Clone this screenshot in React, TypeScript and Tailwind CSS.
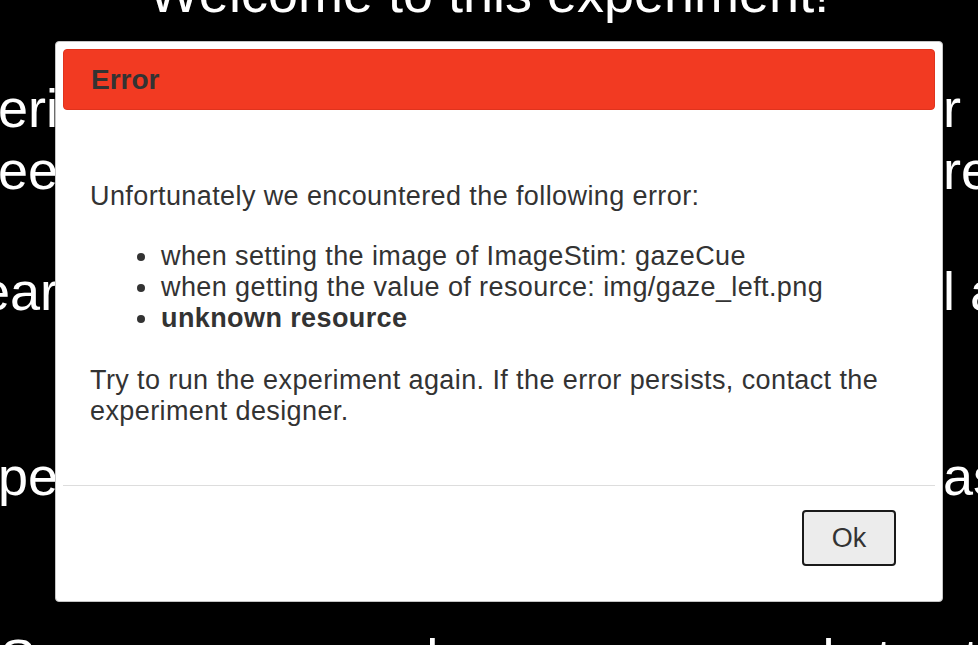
import React from "react";

function Row({
  left,
  mid,
  right,
  className,
}: {
  left: string;
  mid: string;
  right: string;
  className: string;
}) {
  return (
    <div className={"flex w-full whitespace-nowrap " + className}>
      <div className="w-[58px] shrink-0 overflow-hidden flex justify-end">
        <span className="shrink-0">{left}</span>
      </div>
      <div className="flex-1 min-w-0 overflow-hidden">
        <span>{mid}</span>
      </div>
      <div className="w-[35px] shrink-0 overflow-hidden">
        <span>{right}</span>
      </div>
    </div>
  );
}

export default function App() {
  return (
    <div className="relative w-full h-[645px] bg-black overflow-hidden font-['Liberation_Sans',Arial,sans-serif]">
      {/* experiment canvas text behind the dialog */}
      <div className="flex flex-col text-white text-[54px] leading-[62px]">
        <div className="mt-[-38px] text-center whitespace-nowrap">Welcome to this experiment!</div>
        <Row
          className="mt-[53px]"
          left="In this experi"
          mid="ment you will see a face in the center of the screen. Keep you"
          right="r"
        />
        <Row
          className="mt-0"
          left="eyes fixed on the scree"
          mid="n at all times. A target letter will then appear either to the left or to the right of the face, and you a"
          right="re asked"
        />
        <Row
          className="mt-[59px]"
          left="Targets may appear"
          mid=" on either side. Press the key that matches the side on which they wil"
          right="l appear"
        />
        <Row
          className="mt-[123px]"
          left="Respond with both spe"
          mid="ed and accuracy. The direction of the gaze does not predict the target, so respond"
          right="as fast"
        />
        <div className="mt-[120px] text-center whitespace-nowrap">
          So press space when you are ready to start the task and let's begin
        </div>
      </div>

      {/* error dialog */}
      <div className="absolute left-[55px] top-[41px] w-[888px] h-[561px] bg-white border border-[#c5c5c5] rounded-[4px] p-[7px] flex flex-col text-[#333]">
        <div className="h-[61px] shrink-0 bg-[#f23a22] border border-[#e0331d] rounded-[4px] flex items-center pl-[27px]">
          <span className="text-[28px] font-bold leading-none">Error</span>
        </div>
        <div className="flex-1 pl-[27px] pr-[27px] pt-[71px] text-[27px] leading-[31px] tracking-[0.4px]">
          <p>Unfortunately we encountered the following error:</p>
          <ul className="mt-[29px] pl-[47px]">
            <li className="flex items-center">
              <span className="w-[8px] h-[8px] rounded-full bg-[#333] mr-[16px] shrink-0" />
              <span>when setting the image of ImageStim: gazeCue</span>
            </li>
            <li className="flex items-center">
              <span className="w-[8px] h-[8px] rounded-full bg-[#333] mr-[16px] shrink-0" />
              <span>when getting the value of resource: img/gaze_left.png</span>
            </li>
            <li className="flex items-center">
              <span className="w-[8px] h-[8px] rounded-full bg-[#333] mr-[16px] shrink-0" />
              <span className="font-bold">unknown resource</span>
            </li>
          </ul>
          <p className="mt-[31px]">
            Try to run the experiment again. If the error persists, contact the experiment designer.
          </p>
        </div>
        <div className="h-px shrink-0 bg-[#dddddd]" />
        <div className="flex justify-end pt-[24px] pb-[28px] pr-[39px] shrink-0">
          <button className="w-[94px] h-[56px] bg-[#ececec] border-2 border-[#1a1a1a] rounded-[4px] text-[27px] leading-[31px] text-[#333] flex items-center justify-center">
            Ok
          </button>
        </div>
      </div>
    </div>
  );
}
